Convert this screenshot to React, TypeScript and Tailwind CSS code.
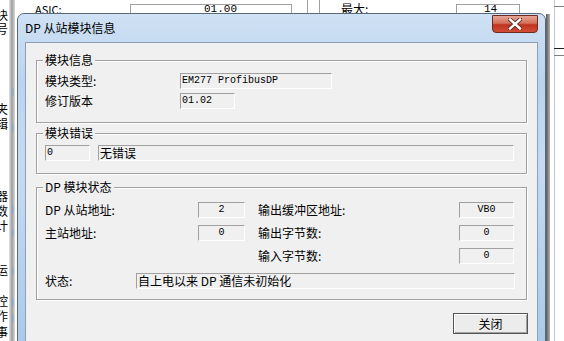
import React from "react";

const cjk = "font-['Noto_Sans_CJK_SC','Noto_Sans',sans-serif]";
const mono = "font-['Liberation_Mono','DejaVu_Sans_Mono',monospace]";

function Field({
  w,
  children,
  align = "left",
  isMono = false,
}: {
  w: number;
  children?: React.ReactNode;
  align?: "left" | "center";
  isMono?: boolean;
}) {
  return (
    <div
      className={`h-[16px] shrink-0 border border-t-[#a0a0a0] border-l-[#a0a0a0] border-r-white border-b-white bg-[#f0f0f0] text-black flex items-center overflow-hidden whitespace-nowrap ${
        align === "center" ? "justify-center" : "justify-start pl-[1px]"
      } ${isMono ? `${mono} text-[10px]` : `${cjk} text-[12px]`} leading-[14px]`}
      style={{ width: w }}
    >
      {children}
    </div>
  );
}

function Group({
  title,
  className,
  children,
}: {
  title: string;
  className?: string;
  children: React.ReactNode;
}) {
  return (
    <div
      className={`relative border border-[#a0a0a0] shadow-[inset_1px_1px_0_#ffffff,1px_1px_0_#ffffff] ${className ?? ""}`}
    >
      <div
        className={`absolute -top-[9px] left-[6px] bg-[#f0f0f0] px-[2px] ${cjk} text-[12px] leading-[16px] text-black whitespace-nowrap`}
      >
        {title}
      </div>
      {children}
    </div>
  );
}

function Label({ w, children }: { w?: number; children: React.ReactNode }) {
  return (
    <div
      className={`${cjk} text-[12px] leading-[16px] text-black whitespace-nowrap shrink-0`}
      style={w ? { width: w } : undefined}
    >
      {children}
    </div>
  );
}

export default function App() {
  const leftChars: [string, number][] = [
    ["块", 8],
    ["号", 22],
    ["夹", 102],
    ["辑", 117],
    ["器", 189],
    ["数", 204],
    ["计", 219],
    ["运", 263],
    ["控", 294],
    ["作", 309],
    ["事", 325],
  ];
  return (
    <div className="relative w-[564px] h-[341px] overflow-hidden bg-white">
      {/* background window: left column of cut characters */}
      {leftChars.map(([c, y]) => (
        <div
          key={c + y}
          className={`absolute left-[-4px] h-[13px] overflow-hidden ${cjk} text-[12px] leading-[13px] text-black`}
          style={{ top: y }}
        >
          {c}
        </div>
      ))}
      <div className="absolute left-[9px] top-0 w-[6px] h-[341px] bg-[linear-gradient(to_right,#e6e6e6,#9c9c9c_50%,#dcdcdc)]" />
      <div className="absolute left-[11px] top-[88px] w-[3px] h-[8px] rounded-full bg-[#8fa8c8]/60" />
      <div className="absolute left-[11px] top-[124px] w-[3px] h-[8px] rounded-full bg-[#8fa8c8]/60" />
      <div className="absolute left-[11px] top-[206px] w-[3px] h-[8px] rounded-full bg-[#8fa8c8]/60" />
      <div className="absolute left-[11px] top-[229px] w-[3px] h-[8px] rounded-full bg-[#8fa8c8]/60" />
      <div className="absolute left-[11px] top-[267px] w-[3px] h-[8px] rounded-full bg-[#8fa8c8]/60" />
      <div className="absolute left-[11px] top-[298px] w-[3px] h-[8px] rounded-full bg-[#8fa8c8]/60" />
      <div className="absolute left-[11px] top-[314px] w-[3px] h-[8px] rounded-full bg-[#8fa8c8]/60" />

      {/* background window: top row */}
      <div className={`absolute left-[35px] top-[2px] ${cjk} text-[11px] leading-[14px] text-black`}>
        ASIC:
      </div>
      <div className="absolute left-[130px] top-[4px] w-[162px] h-[14px] border border-[#a0a0a0] border-b-0" />
      <div className={`absolute left-[204px] top-[2px] ${mono} text-[11px] leading-[14px] text-black`}>
        01.00
      </div>
      <div className="absolute left-[307px] top-0 w-px h-[14px] bg-[#a0a0a0]" />
      <div className="absolute left-[319px] top-0 w-px h-[14px] bg-[#a0a0a0]" />
      <div className={`absolute left-[341px] top-[2px] ${cjk} text-[12px] leading-[14px] text-black`}>
        最大:
      </div>
      <div className="absolute left-[456px] top-[4px] w-[64px] h-[14px] border border-[#a0a0a0] border-b-0" />
      <div className={`absolute left-[484px] top-[2px] ${mono} text-[11px] leading-[14px] text-black`}>
        14
      </div>

      {/* background window: right edge */}
      <div className="absolute left-[546px] top-[14px] w-[4px] h-[327px] bg-[linear-gradient(to_right,#5a5a5a,#b0b0b0)]" />
      <div className="absolute left-[554px] top-0 w-px h-[341px] bg-[#c8c8c8]" />
      <div className="absolute left-[554px] top-[6px] w-[10px] h-px bg-[#808080]" />
      <div className="absolute left-[554px] top-[48px] w-[10px] h-px bg-[#202020]" />
      <div className="absolute left-[554px] top-[55px] w-[10px] h-px bg-[#808080]" />

      {/* dialog window */}
      <div className="absolute left-[17px] top-[13px] w-[529px] h-[340px] rounded-t-[7px] border border-[#59697c] bg-[linear-gradient(to_bottom,#cfe1f4,#bad4ee_20%,#c6dbf1_45%,#a9c9ea)] pt-[28px] px-[7px] flex flex-col">
        {/* title bar */}
        <div
          className={`absolute left-[7px] top-[6px] ${cjk} text-[12px] leading-[16px] text-black whitespace-nowrap`}
        >
          DP 从站模块信息
        </div>
        <div className="absolute left-[474px] top-[1px] w-[46px] h-[18px] rounded-b-[4px] border border-[#6b2b22] bg-[linear-gradient(to_bottom,#e7a596,#d4705c_45%,#c0331f_55%,#d24d35)] flex items-center justify-center">
          <svg width="14" height="12" viewBox="0 0 14 12">
            <path
              d="M2 1.5 L12 10.5 M12 1.5 L2 10.5"
              stroke="#5a2a24"
              strokeWidth="4.2"
              strokeLinecap="square"
            />
            <path
              d="M2 1.5 L12 10.5 M12 1.5 L2 10.5"
              stroke="#ffffff"
              strokeWidth="2.4"
              strokeLinecap="square"
            />
          </svg>
        </div>

        {/* client area */}
        <div className="flex-1 border border-[#8aa0b8] bg-[#f0f0f0] px-[10px] pt-[17px] flex flex-col">
          <Group title="模块信息" className="h-[63px] pt-[12px] pl-[8px] flex flex-col gap-[4px]">
            <div className="flex items-center">
              <Label w={135}>模块类型:</Label>
              <Field w={152} isMono>
                EM277 ProfibusDP
              </Field>
            </div>
            <div className="flex items-center">
              <Label w={135}>修订版本</Label>
              <Field w={55} isMono>
                01.02
              </Field>
            </div>
          </Group>

          <Group title="模块错误" className="mt-[10px] h-[41px] pt-[11px] pl-[8px] flex items-start gap-[8px]">
            <Field w={45} isMono>
              0
            </Field>
            <Field w={416}>无错误</Field>
          </Group>

          <Group title="DP 模块状态" className="mt-[13px] h-[113px] pt-[14px] pl-[8px] flex flex-col">
            <div className="flex items-center">
              <Label w={153}>DP 从站地址:</Label>
              <Field w={47} align="center" isMono>
                2
              </Field>
              <div className="w-[13px]" />
              <Label w={201}>输出缓冲区地址:</Label>
              <Field w={55} align="center" isMono>
                VB0
              </Field>
            </div>
            <div className="flex items-center mt-[7px]">
              <Label w={153}>主站地址:</Label>
              <Field w={47} align="center" isMono>
                0
              </Field>
              <div className="w-[13px]" />
              <Label w={201}>输出字节数:</Label>
              <Field w={55} align="center" isMono>
                0
              </Field>
            </div>
            <div className="flex items-center mt-[7px]">
              <div className="w-[213px]" />
              <Label w={201}>输入字节数:</Label>
              <Field w={55} align="center" isMono>
                0
              </Field>
            </div>
            <div className="flex items-center mt-[9px]">
              <Label w={91}>状态:</Label>
              <Field w={379}>自上电以来 DP 通信未初始化</Field>
            </div>
          </Group>

          <div className="mt-[13px] flex justify-end -mr-[1px]">
            <div
              className={`w-[75px] h-[21px] border border-[#555555] bg-[#ececec] shadow-[inset_1px_1px_0_#ffffff,inset_-1px_-1px_0_#a0a0a0] flex items-center justify-center ${cjk} text-[12px] leading-[16px] text-black`}
            >
              关闭
            </div>
          </div>
        </div>
      </div>
    </div>
  );
}
